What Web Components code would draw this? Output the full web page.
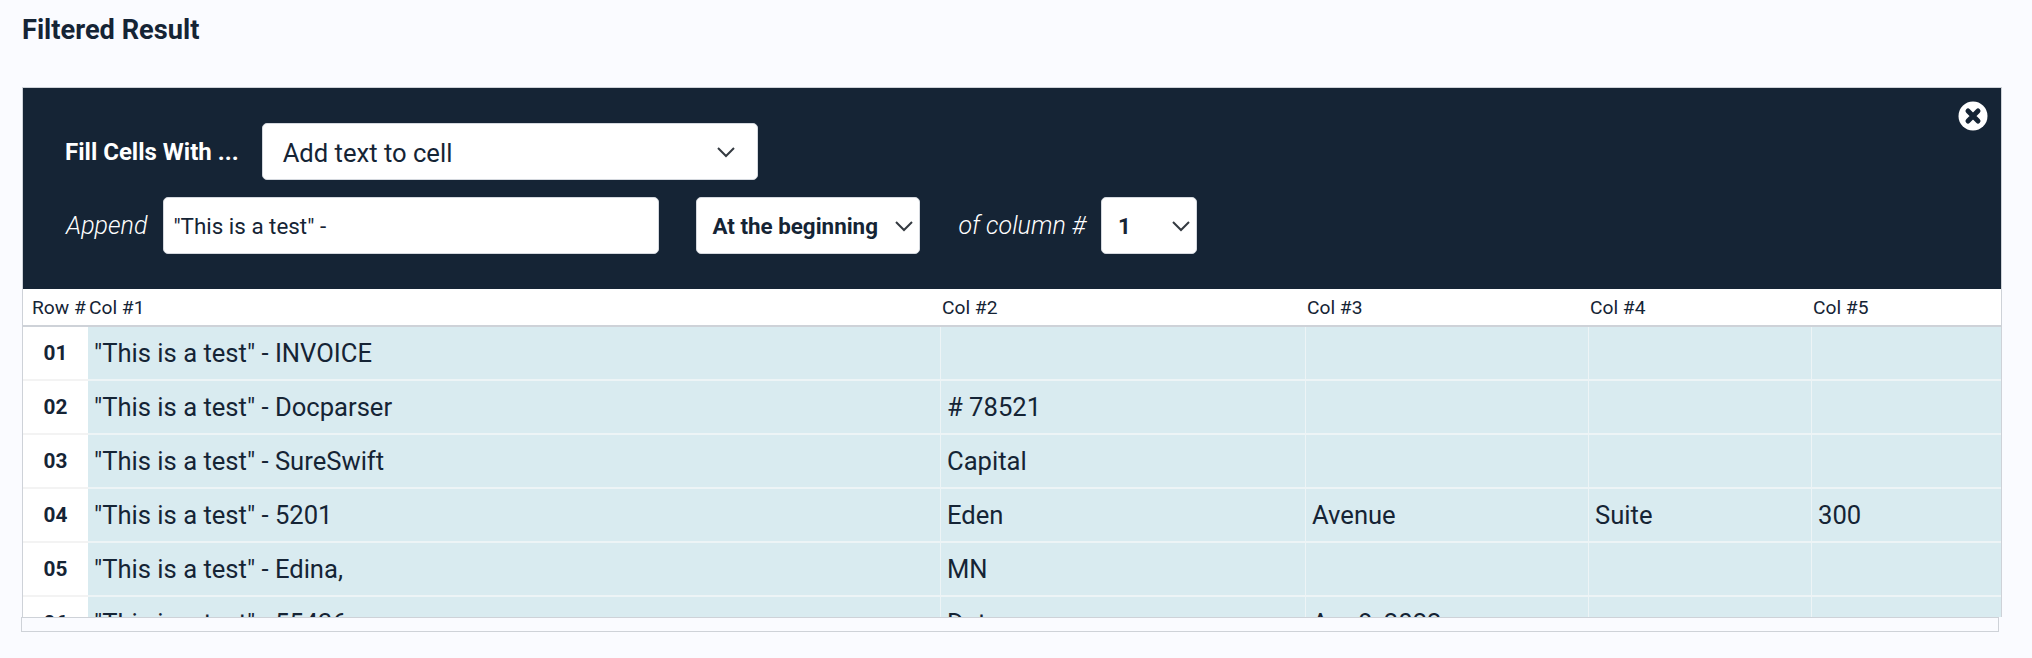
<!DOCTYPE html>
<html>
<head>
<meta charset="utf-8">
<title>Filtered Result</title>
<style>
  html, body { margin: 0; padding: 0; }
  body { background: #fafbff; color: #152435; font-family: Roboto, "Liberation Sans", sans-serif; }
</style>
</head>
<body>
<result-page></result-page>

<template id="select-tpl">
  <style>
    :host {
      display: flex;
      align-items: center;
      justify-content: space-between;
      box-sizing: border-box;
      height: 57px;
      background: #fff;
      border: 1px solid #d4d8de;
      border-radius: 5px;
      color: #152435;
    }
    svg { flex: none; width: 20px; height: 12px; }
  </style>
  <slot></slot>
  <svg viewBox="0 0 20 12" fill="none" stroke="#343a40" stroke-width="2"><path d="M2 2l8 8 8-8"/></svg>
</template>

<script>
  class FillSelect extends HTMLElement {
    constructor() {
      super();
      this.shadowDOM = this.attachShadow({ mode: 'open' });
      this.shadowDOM.appendChild(document.getElementById('select-tpl').content.cloneNode(true));
    }
  }

  class CloseIcon extends HTMLElement {
    constructor() {
      super();
      this.shadowDOM = this.attachShadow({ mode: 'open' });
      this.shadowDOM.innerHTML = `
        <style>
          :host { display: block; position: absolute; top: 13px; right: 13px; width: 30px; height: 30px; }
          svg { display: block; width: 30px; height: 30px; }
        </style>
        <svg viewBox="0 0 30 30">
          <circle cx="15" cy="15" r="14.5" fill="#fff"/>
          <path d="M10 10l10 10M20 10L10 20" stroke="#152435" stroke-width="5" stroke-linecap="round"/>
        </svg>`;
    }
  }

  class FillPanel extends HTMLElement {
    constructor() {
      super();
      this.shadowDOM = this.attachShadow({ mode: 'open' });
      this.shadowDOM.innerHTML = `
        <style>
          :host {
            display: block;
            position: relative;
            box-sizing: border-box;
            height: 201px;
            padding: 35px 42px 0;
            background: #152435;
            color: #fff;
          }
          .line { display: flex; align-items: center; }
          .line + .line { margin-top: 17px; }
          .label { font-size: 24px; font-weight: 700; margin-right: 23px; }
          .mode { width: 496px; padding: 0 21px 0 20px; font-size: 25.6px; font-weight: 400; }
          .mode span { padding-top: 2px; }
          em { font-size: 25px; font-weight: 300; font-style: italic; }
          .append { padding-left: 1px; }
          .text {
            box-sizing: border-box;
            width: 496px;
            height: 57px;
            margin: 0 37px 0 16px;
            padding: 0 9px;
            display: flex;
            align-items: center;
            background: #fff;
            border: 1px solid #d4d8de;
            border-radius: 5px;
            color: #152435;
            font-size: 22.4px;
            font-weight: 400;
          }
          .where { width: 224px; padding: 0 5px 0 15px; font-size: 22.4px; font-weight: 700; }
          .of { margin: 0 15px 0 38px; }
          .col { width: 96px; padding: 0 5px 0 16px; font-size: 22.4px; font-weight: 700; }
        </style>
        <close-icon></close-icon>
        <div class="line">
          <span class="label">Fill Cells With ...</span>
          <fill-select class="mode"><span>Add text to cell</span></fill-select>
        </div>
        <div class="line">
          <em class="append">Append</em>
          <div class="text">"This is a test" -</div>
          <fill-select class="where">At the beginning</fill-select>
          <em class="of">of column #</em>
          <fill-select class="col">1</fill-select>
        </div>`;
    }
  }

  const COLUMNS = '65px 853px 365px 283px 223px 1fr';

  class GridHead extends HTMLElement {
    constructor() {
      super();
      this.shadowDOM = this.attachShadow({ mode: 'open' });
      this.shadowDOM.innerHTML = `
        <style>
          :host {
            display: grid;
            grid-template-columns: ${COLUMNS};
            align-items: center;
            box-sizing: border-box;
            height: 38px;
            background: #fff;
            border-bottom: 2px solid #ced2d8;
            font-size: 19.2px;
          }
          span { padding-left: 1px; }
          span:first-of-type { padding-left: 9px; white-space: nowrap; }
        </style>
        <span>Row #</span><span>Col #1</span><span>Col #2</span><span>Col #3</span><span>Col #4</span><span>Col #5</span>`;
    }
  }

  class GridRow extends HTMLElement {
    constructor() {
      super();
      this.shadowDOM = this.attachShadow({ mode: 'open' });
      const cells = JSON.parse(this.getAttribute('cells'));
      this.shadowDOM.innerHTML = `
        <style>
          :host {
            display: grid;
            grid-template-columns: ${COLUMNS};
            height: 54px;
          }
          div {
            box-sizing: border-box;
            display: flex;
            align-items: center;
            padding-left: 6px;
            background: #d9ebf0;
            border-right: 1px solid #edf4f6;
            border-bottom: 2px solid #edf4f6;
            font-size: 25.6px;
            font-weight: 400;
          }
          div:last-child { border-right: 0; }
          .num {
            justify-content: center;
            padding: 0;
            background: #fff;
            border-right: 0;
            border-bottom-color: #f3f3f3;
            font-size: 20.8px;
            font-weight: 700;
          }
        </style>
        <div class="num">${this.getAttribute('num')}</div>
        ${cells.map(c => `<div>${c}</div>`).join('')}`;
    }
  }

  class ResultGrid extends HTMLElement {
    constructor() {
      super();
      this.shadowDOM = this.attachShadow({ mode: 'open' });
      this.shadowDOM.innerHTML = `
        <style>
          :host { display: block; }
          .frame {
            box-sizing: border-box;
            height: 530px;
            overflow: hidden;
            border: 1px solid #ced2d8;
            border-bottom: 0;
          }
          .bar {
            box-sizing: border-box;
            width: 1978px;
            height: 15px;
            margin-left: -1px;
            border: 1px solid #ced2d8;
          }
        </style>
        <div class="frame"><slot></slot></div>
        <div class="bar"></div>`;
    }
  }

  class ResultPage extends HTMLElement {
    constructor() {
      super();
      this.shadowDOM = this.attachShadow({ mode: 'open' });
      const t = '"This is a test" - ';
      const rows = [
        ['01', [t + 'INVOICE', '', '', '', '']],
        ['02', [t + 'Docparser', '# 78521', '', '', '']],
        ['03', [t + 'SureSwift', 'Capital', '', '', '']],
        ['04', [t + '5201', 'Eden', 'Avenue', 'Suite', '300']],
        ['05', [t + 'Edina,', 'MN', '', '', '']],
        ['06', [t + '55436', 'Date', 'Apr 8, 2022', '', '']]
      ];
      const markup = rows.map(([num, cells]) =>
        `<grid-row num="${num}" cells='${JSON.stringify(cells).replace(/'/g, '&#39;')}'></grid-row>`).join('');
      this.shadowDOM.innerHTML = `
        <style>
          :host { display: block; padding: 14px 30px 0 22px; height: 644px; box-sizing: border-box; }
          h2 { margin: 0 0 41px; font-size: 27.2px; line-height: 32px; font-weight: 700; color: #152435; }
        </style>
        <h2>Filtered Result</h2>
        <result-grid>
          <fill-panel></fill-panel>
          <grid-head></grid-head>
          ${markup}
        </result-grid>`;
    }
  }

  customElements.define('fill-select', FillSelect);
  customElements.define('close-icon', CloseIcon);
  customElements.define('fill-panel', FillPanel);
  customElements.define('grid-head', GridHead);
  customElements.define('grid-row', GridRow);
  customElements.define('result-grid', ResultGrid);
  customElements.define('result-page', ResultPage);
</script>
</body>
</html>
